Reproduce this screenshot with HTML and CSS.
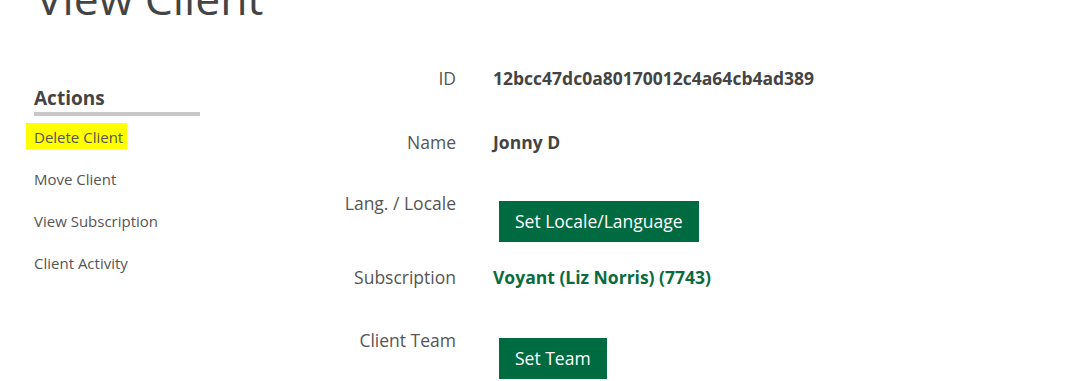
FILE: index.html
```html
<!DOCTYPE html>
<html lang="en">
<head>
    <meta charset="UTF-8">
    <title>View Client</title>
    <link rel="stylesheet" href="styles.css">
</head>
<body>
    <h1 class="page-title">View Client</h1>

    <div class="layout">
        <div class="sidebar">
            <h3 class="sidebar-title">Actions</h3>
            <ul class="actions">
                <li><a href="#" class="marked">Delete Client</a></li>
                <li><a href="#">Move Client</a></li>
                <li><a href="#">View Subscription</a></li>
                <li><a href="#">Client Activity</a></li>
            </ul>
        </div>

        <div class="details">
            <div class="row row-id">
                <div class="label">ID</div>
                <div class="value">12bcc47dc0a80170012c4a64cb4ad389</div>
            </div>
            <div class="row row-name">
                <div class="label">Name</div>
                <div class="value">Jonny D</div>
            </div>
            <div class="row row-locale">
                <div class="label">Lang. / Locale</div>
                <div class="value"><button class="btn">Set Locale/Language</button></div>
            </div>
            <div class="row row-sub">
                <div class="label">Subscription</div>
                <div class="value"><a href="#" class="green-link">Voyant (Liz Norris) (7743)</a></div>
            </div>
            <div class="row row-team">
                <div class="label">Client Team</div>
                <div class="value"><button class="btn">Set Team</button></div>
            </div>
        </div>
    </div>
</body>
</html>
```

FILE: styles.css
```css
body {
    font-family: "Open Sans", Arial, sans-serif;
    color: #444;
    margin: 0;
    background: #fff;
    overflow: hidden;
}
.page-title {
    font-size: 44.5px;
    font-weight: normal;
    margin: 0;
    padding-left: 36px;
    line-height: 40px;
    margin-top: -22px;
    color: #444;
}
.layout {
    display: flex;
    margin-top: 45px;
}
.sidebar {
    width: 166px;
    margin-left: 34px;
    padding-top: 23px;
}
.sidebar-title {
    font-size: 19px;
    font-weight: bold;
    margin: 0;
    line-height: 24px;
    padding-bottom: 2px;
    border-bottom: 4px solid #c8c8c8;
    color: #444;
}
.actions {
    list-style: none;
    margin: 0;
    padding: 0;
    margin-top: 6px;
}
.actions li {
    box-sizing: border-box;
    height: 42px;
    line-height: 24px;
    padding-top: 3px;
}
.actions a {
    color: #555;
    font-size: 15px;
    text-decoration: none;
}
.actions a.marked {
    background: #ffff00;
    display: inline-block;
    line-height: 22px;
    padding: 3px 4px 1px 8px;
    margin-left: -8px;
    margin-top: -3px;
}
.details {
    margin-left: 93px;
    padding-top: 3px;
}
.row {
    display: flex;
}
.label {
    width: 163px;
    text-align: right;
    font-size: 17.5px;
    color: #555;
    line-height: 24px;
}
.value {
    margin-left: 37px;
    font-size: 17.5px;
    font-weight: bold;
    line-height: 24px;
    color: #444;
}
.row-id { height: 64px; }
.row-name { height: 61px; }
.row-locale { height: 74px; }
.row-sub { height: 63px; }
.green-link {
    color: #0b6b3f;
    text-decoration: none;
}
.btn {
    font-family: "Open Sans", Arial, sans-serif;
    font-size: 17.5px;
    background: #006a40;
    color: #fff;
    border: none;
    padding: 9px 16px;
    margin-left: 6px;
    margin-top: 10px;
    line-height: 23px;
    cursor: pointer;
}
```
